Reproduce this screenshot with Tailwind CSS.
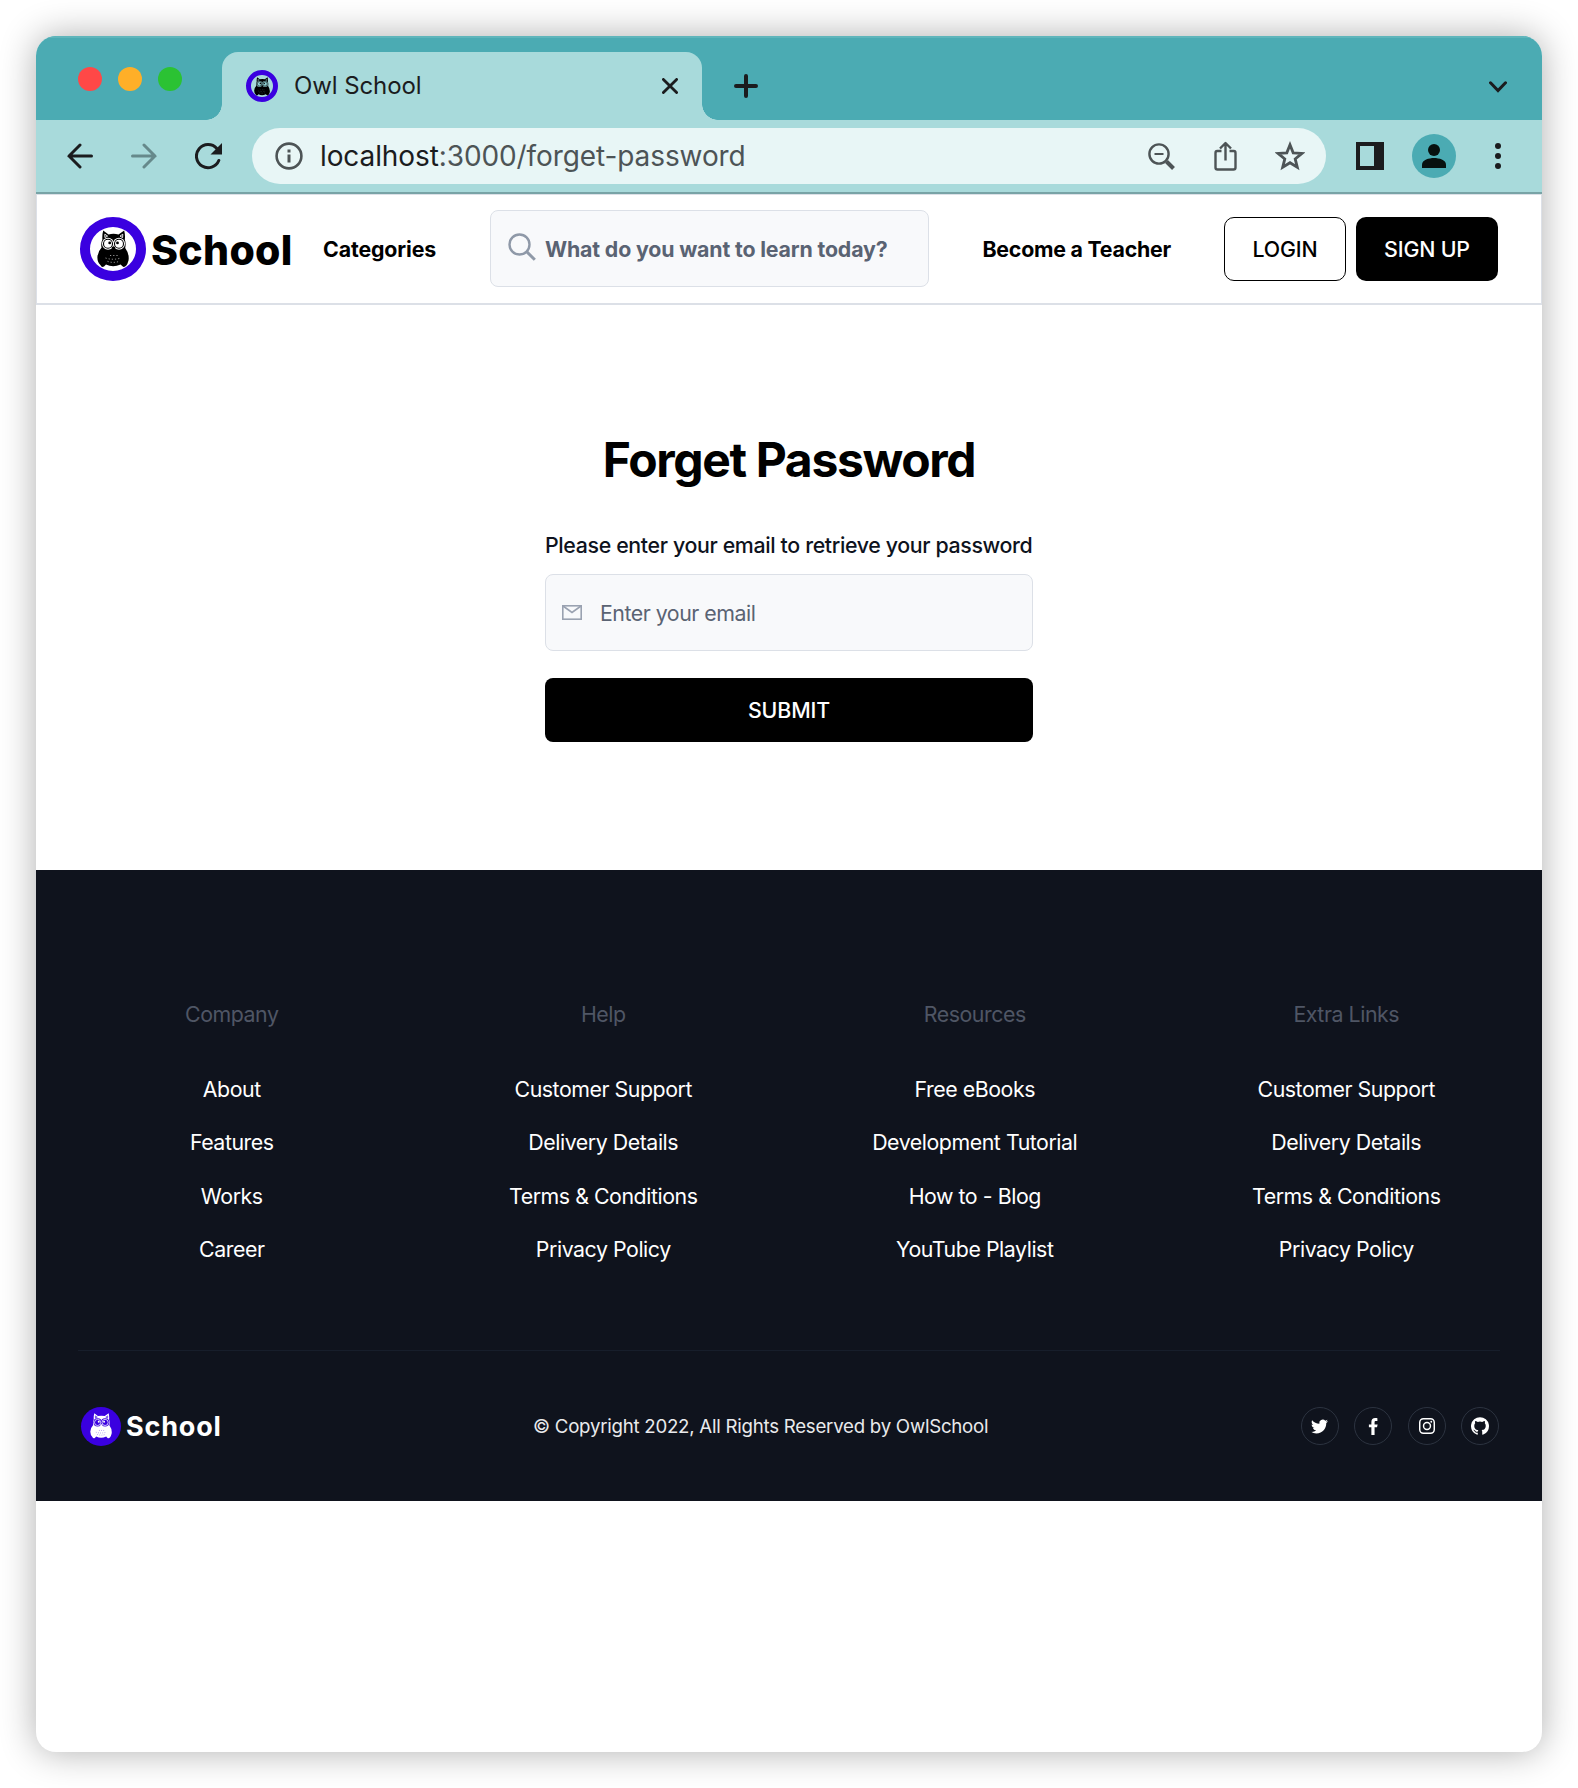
<!DOCTYPE html>
<html lang="en">
<head>
<meta charset="utf-8">
<title>Owl School</title>
<script src="https://cdn.jsdelivr.net/npm/@tailwindcss/browser@4"></script>
</head>
<body class="h-[1788px] w-[1578px] overflow-hidden bg-white p-9 font-[Inter,sans-serif] text-[21.33px]">
<svg class="hidden">
  <symbol id="owl" viewBox="0 0 32 38">
    <path fill="currentColor" d="M6.200 .4L11.500 4.500Q16.500 3.200 21.500 4.500L27.200 .4Q28.400 5.500 27.800 9.500Q29.200 13.500 28.200 18Q32.600 24 31.500 30.500Q30.600 34 29.300 35.500Q27 38.200 25.200 36L23.600 34.500Q16 38 9 34.500L7 36.600Q4.600 38 3.400 35Q.2 32 .4 27Q.8 21.500 4.600 17.500Q3.600 13.500 5.400 9.500Q5 5 6.200 .4Z"/>
    <path fill="none" stroke="var(--cut)" stroke-width=".9" d="M7.800 4.200L7.900 7.600L10.600 6.100ZM25.800 4.200L25.600 7.600L23 6.100Z"/>
    <g fill="var(--cut)">
      <circle cx="11" cy="13.800" r="6"/>
      <circle cx="22" cy="13.800" r="6"/>
    </g>
    <g fill="var(--eye)" stroke="currentColor" stroke-width="1.100">
      <circle cx="11" cy="13.800" r="4.500"/>
      <circle cx="22" cy="13.800" r="4.500"/>
    </g>
    <circle cx="12.700" cy="12.900" r="1.400" fill="var(--pupil)"/>
    <circle cx="20.500" cy="12.900" r="1.400" fill="var(--pupil)"/>
    <path fill="currentColor" d="M14.600 16.800h3.800L16.500 21.500Z"/>
    <path fill="none" stroke="var(--cut)" stroke-width=".6" stroke-dasharray="1.200 2" d="M8.500 28Q16 30.500 24 28M10.500 31.300Q16 33.500 22.500 31.300M13 25.500H21"/>
  </symbol>
</svg>

<div class="flex h-[1716px] flex-col overflow-hidden rounded-[20px] bg-white shadow-[0_0_36px_rgba(0,0,0,0.32)]">

  <!-- Tab strip -->
  <div class="flex h-[84px] shrink-0 border-t-2 border-[#5fb5bb] bg-[#4babb3]">
    <div class="flex w-[186px] gap-4 pt-[29px] pl-[42px]">
      <span class="size-6 rounded-full bg-[#ff4847]"></span>
      <span class="size-6 rounded-full bg-[#ffaf28]"></span>
      <span class="size-6 rounded-full bg-[#2bc233]"></span>
    </div>
    <div class="relative mt-[14px] flex w-[480px] items-center rounded-t-2xl bg-[#a8dadb] pr-6 pl-6 text-[#1b1c1e]">
      <span class="absolute bottom-0 -left-4 size-4 bg-[radial-gradient(circle_at_0_0,#4babb3_15.5px,#a8dadb_16px)]"></span>
      <span class="absolute -right-4 bottom-0 size-4 bg-[radial-gradient(circle_at_100%_0,#4babb3_15.500px,#a8dadb_16px)]"></span>
      <span class="flex size-8 items-center justify-center rounded-full border-[5px] border-[#3a00e0] text-black [--cut:#7fb8ba] [--eye:#8fcfd2] [--pupil:#000]"><svg class="h-[19px] w-4"><use href="#owl"/></svg></span>
      <span class="ml-4 text-[24px] tracking-[-0.1px]">Owl School</span>
      <svg class="ml-auto size-4" viewBox="0 0 16 16" stroke="currentColor" stroke-width="2.800" stroke-linecap="round"><path d="M1.400 1.400l13.200 13.200M14.600 1.400L1.400 14.600"/></svg>
    </div>
    <svg class="mt-[36px] ml-8 size-6 text-[#1b1c1e]" viewBox="0 0 24 24" stroke="currentColor" stroke-width="4" stroke-linecap="round"><path d="M12 2v20M2 12h20"/></svg>
    <svg class="mt-[43px] mr-[35px] ml-auto h-3 w-[18px] text-[#1b1c1e]" viewBox="0 0 18 12" fill="none" stroke="currentColor" stroke-width="3" stroke-linecap="round"><path d="M1.500 1.800L9 9.500L16.500 1.800"/></svg>
  </div>

  <!-- Toolbar -->
  <div class="flex h-[74px] shrink-0 items-center border-b-2 border-[#78a3a6] bg-[#a8dadb] pr-10 pl-[31px] text-[#1b1c1e]">
    <svg class="h-[26px] w-[26px]" viewBox="0 0 26 26" fill="none" stroke="currentColor" stroke-width="3" stroke-linecap="round"><path d="M24.500 13H2M13 2L2 13l11 11"/></svg>
    <svg class="ml-[38px] h-[26px] w-[26px] text-[#66898b]" viewBox="0 0 26 26" fill="none" stroke="currentColor" stroke-width="3" stroke-linecap="round"><path d="M1.500 13H24M13 2l11 11L13 24"/></svg>
    <svg class="ml-[38px] size-[27px]" viewBox="0 0 27 27" fill="none" stroke="currentColor" stroke-width="3"><path stroke-linecap="round" d="M23.800 17.500A11.600 11.600 0 1 1 21.800 5.500"/><path fill="currentColor" stroke="none" d="M27 0v11.500H15.500z"/></svg>
    <div class="ml-[30px] flex h-14 w-[1074px] items-center rounded-full bg-[#e8f6f6] pr-[21px] pl-[23px] text-[#4d5456]">
      <svg class="size-7" viewBox="0 0 28 28" fill="none" stroke="currentColor" stroke-width="2.600"><circle cx="14" cy="14" r="12.400"/><path stroke-width="3" d="M14 12.500V20.500M14 7.500v3"/></svg>
      <span class="ml-[17px] text-[28px] tracking-[-0.1px]"><span class="text-[#1b1c1e]">localhost</span>:3000/forget-password</span>
      <svg class="ml-auto size-[27px]" viewBox="0 0 27 27" fill="none" stroke="currentColor" stroke-width="2.400"><circle cx="11" cy="11" r="9.600"/><path stroke-width="1.800" d="M6.500 11h9"/><path stroke-width="4" d="M18.500 18.500l7 7"/></svg>
      <svg class="ml-[39px] h-[30px] w-[23px]" viewBox="0 0 23 30" fill="none" stroke="currentColor" stroke-width="2.400" stroke-linejoin="round"><path d="M7.500 10H3.200Q1.500 10 1.500 12V26.500Q1.500 28.500 3.500 28.500H19.500Q21.500 28.500 21.500 26.500V12Q21.500 10 19.800 10H15.500M11.500 19.500V2.500M6 7.500L11.500 2l5.500 5.500"/></svg>
      <svg class="ml-[38px] size-[30px]" viewBox="0 0 30 30" fill="none" stroke="currentColor" stroke-width="2.800"><path d="M15 3.800l3.200 8 8.700.6-6.700 5.500 2.100 8.400L15 21.700l-7.300 4.600 2.100-8.400-6.700-5.500 8.700-.6z"/></svg>
    </div>
    <svg class="ml-[30px] size-7" viewBox="0 0 28 28"><path fill="currentColor" fill-rule="evenodd" d="M0 0h28v28H0zM4 4v20h14V4z"/></svg>
    <span class="ml-7 flex size-11 items-center justify-center rounded-full bg-[#4babb3]"><svg class="size-6" viewBox="0 0 24 24" fill="#07110f"><circle cx="12" cy="6" r="6"/><path d="M0 24v-3.500C0 16 7 14 12 14s12 2 12 6.500V24z"/></svg></span>
    <svg class="ml-[39px] h-[26px] w-[6px]" viewBox="0 0 6 26" fill="currentColor"><circle cx="3" cy="3" r="3"/><circle cx="3" cy="13" r="3"/><circle cx="3" cy="23" r="3"/></svg>
  </div>

  <!-- Site header -->
  <header class="flex h-[111px] shrink-0 items-center border border-b-2 border-[#dce0e7] pr-[43px] pl-[43px] font-bold text-black">
    <div class="flex items-center">
      <span class="flex h-16 w-[66px] items-center justify-center rounded-[50%] border-[10px] border-[#3a00e0] [--cut:#fff] [--eye:#fff] [--pupil:#000]"><svg class="h-[38px] w-8 shrink-0"><use href="#owl"/></svg></span>
      <span class="ml-[5px] w-[144px] pt-[3px] text-[41px] font-extrabold tracking-[0.3px]">School</span>
    </div>
    <span class="ml-[28px] w-[114px] pt-[2px] tracking-[-0.120px]">Categories</span>
    <div class="mb-[2px] ml-[53px] flex h-[77px] w-[439px] items-center rounded-lg border border-[#dce0e7] bg-[#f8f9fb] pl-[17px] text-[#5a6373]">
      <svg class="mb-[2px] size-7 shrink-0 text-[#8f99a8]" viewBox="0 0 28 28" fill="none" stroke="currentColor" stroke-width="2.400"><circle cx="11.500" cy="11.500" r="10"/><path stroke-width="3" d="M18.800 18.800l8 8"/></svg>
      <span class="ml-[9px] pt-[3px] tracking-[-0.160px] whitespace-nowrap">What do you want to learn today?</span>
    </div>
    <span class="mr-[53px] ml-auto pt-[2px] tracking-[-0.230px]">Become a Teacher</span>
    <span class="flex h-16 w-[122px] items-center justify-center rounded-[10px] border border-black pt-[2px] font-medium tracking-[-0.1px]">LOGIN</span>
    <span class="ml-[10px] flex h-16 w-[142px] items-center justify-center rounded-[10px] bg-black pt-[2px] font-medium tracking-[-0.150px] text-white">SIGN UP</span>
  </header>

  <!-- Form -->
  <main class="flex h-[565px] shrink-0 flex-col items-center pt-[123px]">
    <h1 class="text-[48px] leading-[64px] font-bold tracking-[-1.350px] text-black">Forget Password</h1>
    <div class="mt-[37px] flex w-[488px] flex-col">
      <label class="leading-8 font-medium tracking-[-0.350px] whitespace-nowrap text-[#0e131d]">Please enter your email to retrieve your password</label>
      <div class="mt-[13px] flex h-[77px] items-center rounded-lg border border-[#dce0e7] bg-[#f8f9fb] pl-4 text-[#5a6373]">
        <svg class="h-[15px] w-5 text-[#9aa2b1]" viewBox="0 0 20 15" fill="none" stroke="currentColor" stroke-width="1.600"><rect x=".8" y=".8" width="18.400" height="13.400"/><path d="M1 1l9 6.500L19 1"/></svg>
        <span class="ml-[18px] pt-[2px] tracking-[-0.480px]">Enter your email</span>
      </div>
      <div class="mt-[27px] flex h-16 items-center justify-center rounded-lg bg-black pt-[2px] font-medium tracking-[-0.1px] text-white">SUBMIT</div>
    </div>
  </main>

  <!-- Footer -->
  <footer class="h-[631px] shrink-0 bg-[#0f131d] px-[42px] pt-[128px] text-white">
    <div class="grid h-[352px] grid-cols-4 gap-16 text-center leading-8 tracking-[-0.450px]">
      <div><div class="mb-[43px] text-[#4f5665]">Company</div><div class="space-y-[21.330px]"><div>About</div><div>Features</div><div>Works</div><div>Career</div></div></div>
      <div><div class="mb-[43px] text-[#4f5665]">Help</div><div class="space-y-[21.330px]"><div>Customer Support</div><div>Delivery Details</div><div>Terms &amp; Conditions</div><div>Privacy Policy</div></div></div>
      <div><div class="mb-[43px] text-[#4f5665]">Resources</div><div class="space-y-[21.330px]"><div>Free eBooks</div><div>Development Tutorial</div><div>How to - Blog</div><div>YouTube Playlist</div></div></div>
      <div><div class="mb-[43px] text-[#4f5665]">Extra Links</div><div class="space-y-[21.330px]"><div>Customer Support</div><div>Delivery Details</div><div>Terms &amp; Conditions</div><div>Privacy Policy</div></div></div>
    </div>
    <div class="flex h-[151px] items-center border-t border-[#171e2b]">
      <div class="flex w-[455px] items-center pl-[3px]">
        <span class="flex h-[39px] w-10 items-center justify-center rounded-[50%] bg-[#3a00e0] text-white [--cut:#3a00e0] [--eye:#3a00e0] [--pupil:#fff]"><svg class="h-[26px] w-[22px]"><use href="#owl"/></svg></span>
        <span class="ml-[5px] pt-[2px] text-[27px] font-bold tracking-[0.800px]">School</span>
      </div>
      <span class="pt-[2px] text-[18.670px] tracking-[-0.250px] text-[#e9eaec]">© Copyright 2022, All Rights Reserved by OwlSchool</span>
      <div class="ml-auto flex gap-[15.500px] pr-px">
        <span class="flex size-[38px] items-center justify-center rounded-full border border-[#2c3340]"><svg class="size-[17px]" viewBox="0 0 24 24" fill="currentColor"><path d="M23.950 4.570a10 10 0 0 1-2.820.77 4.960 4.960 0 0 0 2.160-2.720c-.95.550-2 .950-3.130 1.180a4.920 4.920 0 0 0-8.380 4.480C7.690 8.100 4.070 6.130 1.640 3.160a4.820 4.820 0 0 0-.67 2.480c0 1.710.87 3.210 2.190 4.100a4.900 4.900 0 0 1-2.230-.62v.06a4.920 4.920 0 0 0 3.950 4.830 5 5 0 0 1-2.210.08 4.940 4.940 0 0 0 4.600 3.420A9.870 9.870 0 0 1 0 19.540a13.990 13.990 0 0 0 7.550 2.210c9.050 0 14-7.500 14-13.980 0-.21 0-.42-.02-.63a9.940 9.940 0 0 0 2.460-2.550z"/></svg></span>
        <span class="flex size-[38px] items-center justify-center rounded-full border border-[#2c3340]"><svg class="size-[17px]" viewBox="0 0 24 24" fill="currentColor"><path d="M17.500 4.100V.3C17 .2 15.900 0 14.300 0 11 0 9 2 9 5.500V9H5.500v4H9v11h4.500V13H17l.8-4h-4.300V6c0-1.200.5-1.900 2-1.900z"/></svg></span>
        <span class="flex size-[38px] items-center justify-center rounded-full border border-[#2c3340]"><svg class="size-4" viewBox="0 0 24 24" fill="none" stroke="currentColor" stroke-width="2.200"><rect x="1.100" y="1.100" width="21.800" height="21.800" rx="5.500"/><circle cx="12" cy="12" r="5.200"/><circle cx="18.400" cy="5.600" r="1.400" fill="currentColor" stroke="none"/></svg></span>
        <span class="flex size-[38px] items-center justify-center rounded-full border border-[#2c3340]"><svg class="size-[18px]" viewBox="0 0 24 24" fill="currentColor"><path d="M12 .3a12 12 0 0 0-3.800 23.380c.6.120.83-.26.830-.57v-2.230c-3.340.72-4.040-1.420-4.040-1.420-.55-1.380-1.340-1.750-1.340-1.750-1.080-.74.090-.73.090-.73 1.200.09 1.840 1.240 1.840 1.240 1.070 1.830 2.800 1.300 3.490 1 .1-.78.420-1.310.760-1.610-2.670-.3-5.470-1.330-5.470-5.930 0-1.310.47-2.380 1.240-3.220-.14-.3-.54-1.520.1-3.180 0 0 1-.32 3.300 1.230a11.500 11.500 0 0 1 6 0c2.280-1.550 3.290-1.230 3.290-1.230.64 1.660.24 2.880.120 3.180a4.650 4.650 0 0 1 1.230 3.220c0 4.610-2.800 5.630-5.480 5.920.42.360.81 1.100.810 2.220v3.290c0 .31.200.69.820.57A12 12 0 0 0 12 .3z"/></svg></span>
      </div>
    </div>
  </footer>
</div>
</body>
</html>
